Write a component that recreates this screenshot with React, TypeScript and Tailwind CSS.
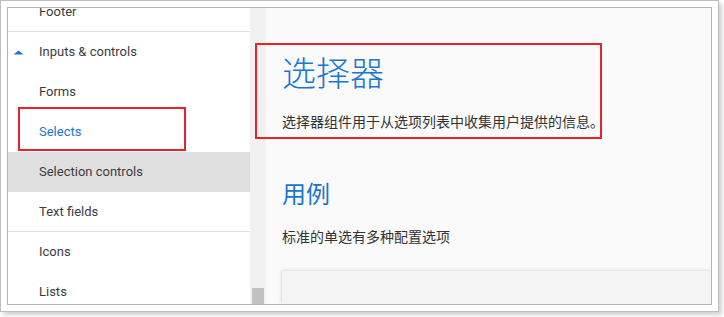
import { ReactNode } from 'react'

const CJK = '"Noto Sans CJK SC", "Noto Sans", sans-serif'

function NavItem({
  children,
  active,
  selected,
  divider,
}: {
  children: ReactNode
  active?: boolean
  selected?: boolean
  divider?: boolean
}) {
  return (
    <div
      className={`flex h-[40px] items-center pl-[31px] text-[13px] ${
        selected ? 'bg-[#e0e0e0]' : ''
      } ${divider ? 'border-b border-[#e0e0e0]' : ''} ${active ? 'text-[#1976d2]' : 'text-[#3c3c3c]'}`}
    >
      {children}
    </div>
  )
}

export default function App() {
  return (
    <div className="h-[317px] w-[724px] overflow-hidden bg-white" style={{ fontFamily: 'Roboto, sans-serif' }}>
      <div className="relative h-[312px] w-[719px] border border-[#bdbdbd] bg-white p-[6px] shadow-[3px_3px_4px_rgba(0,0,0,0.18)]">
        <div className="flex h-full w-full overflow-hidden border border-[#b4b4b4]">
          {/* sidebar */}
          <div className="w-[242px] shrink-0 overflow-hidden bg-white">
            <div className="-mt-[16px]">
              <NavItem divider>Footer</NavItem>
              <div className="flex h-[40px] items-center text-[13px] text-[#3c3c3c]">
                <svg width="31" height="8" viewBox="0 0 31 8" className="shrink-0">
                  <path d="M5.5 6.5 L10.5 2.5 L15.5 6.5 Z" fill="#1976d2" />
                </svg>
                Inputs &amp; controls
              </div>
              <NavItem>Forms</NavItem>
              <NavItem active>Selects</NavItem>
              <NavItem selected>Selection controls</NavItem>
              <NavItem divider>Text fields</NavItem>
              <NavItem>Icons</NavItem>
              <NavItem>Lists</NavItem>
            </div>
          </div>

          {/* scrollbar */}
          <div className="flex w-[16px] shrink-0 flex-col bg-[#f1f1f1]">
            <div className="flex-1" />
            <div className="mx-[2px] h-[16px] bg-[#c1c1c1]" />
          </div>

          {/* content */}
          <div className="flex flex-1 flex-col bg-[#fafafa] pl-[16px]" style={{ fontFamily: CJK }}>
            <h1 className="mt-[44px] text-[34px] leading-[40px] font-light text-[#1976d2]">选择器</h1>
            <p className="mt-[19px] text-[14px] leading-[20px] text-[#333]">
              选择器组件用于从选项列表中收集用户提供的信息。
            </p>
            <h2 className="mt-[46px] text-[24px] leading-[32px] font-normal text-[#1976d2]">用例</h2>
            <p className="mt-[17px] text-[14px] leading-[20px] text-[#333]">标准的单选有多种配置选项</p>
            <div className="mt-[25px] flex-1 bg-[#f5f5f5] shadow-[-1px_-1px_3px_rgba(0,0,0,0.12)]" />
          </div>
        </div>

        {/* annotation boxes */}
        <div className="pointer-events-none absolute left-[17px] top-[106px] h-[44px] w-[168px] border-2 border-[#e8212a]" />
        <div className="pointer-events-none absolute left-[254px] top-[42px] h-[96px] w-[347px] border-2 border-[#e8212a]" />
      </div>
    </div>
  )
}
